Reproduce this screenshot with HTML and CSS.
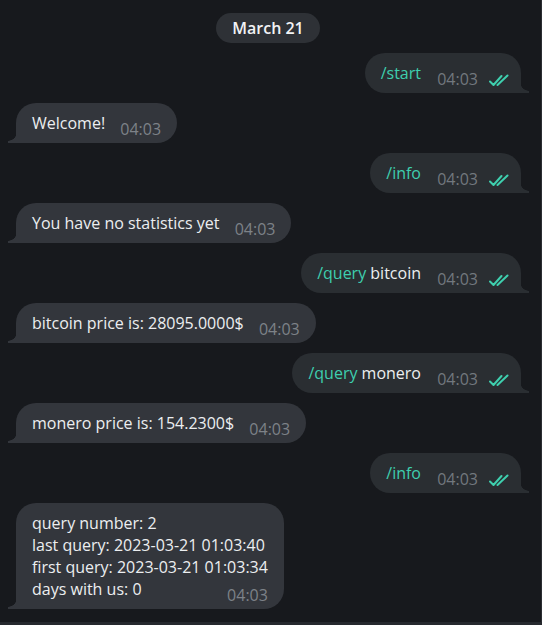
FILE: index.html
```html
<!DOCTYPE html>
<html>
<head>
<meta charset="utf-8">
<link rel="stylesheet" href="styles.css">
</head>
<body>
<div class="app">
  <div class="chat">
    <div class="date">March 21</div>

    <div class="row out">
      <div class="bubble">
        <div class="text"><span class="cmd">/start</span><span class="spacer"></span></div>
        <div class="meta"><span class="time">04:03</span><svg class="check" width="22" height="13" viewBox="0 0 22 13"><path d="M1 7.5 L4.5 11 L12.5 2 M8.5 11 L18.5 1.5" fill="none" stroke="#3ecfae" stroke-width="2" stroke-linecap="round" stroke-linejoin="round"/></svg></div>
      </div>
    </div>

    <div class="row in">
      <div class="bubble">
        <div class="text">Welcome!<span class="spacer"></span></div>
        <div class="meta"><span class="time">04:03</span></div>
      </div>
    </div>

    <div class="row out">
      <div class="bubble">
        <div class="text"><span class="cmd">/info</span><span class="spacer"></span></div>
        <div class="meta"><span class="time">04:03</span><svg class="check" width="22" height="13" viewBox="0 0 22 13"><path d="M1 7.5 L4.5 11 L12.5 2 M8.5 11 L18.5 1.5" fill="none" stroke="#3ecfae" stroke-width="2" stroke-linecap="round" stroke-linejoin="round"/></svg></div>
      </div>
    </div>

    <div class="row in">
      <div class="bubble">
        <div class="text">You have no statistics yet<span class="spacer"></span></div>
        <div class="meta"><span class="time">04:03</span></div>
      </div>
    </div>

    <div class="row out">
      <div class="bubble">
        <div class="text"><span class="cmd">/query</span> bitcoin<span class="spacer"></span></div>
        <div class="meta"><span class="time">04:03</span><svg class="check" width="22" height="13" viewBox="0 0 22 13"><path d="M1 7.5 L4.5 11 L12.5 2 M8.5 11 L18.5 1.5" fill="none" stroke="#3ecfae" stroke-width="2" stroke-linecap="round" stroke-linejoin="round"/></svg></div>
      </div>
    </div>

    <div class="row in">
      <div class="bubble">
        <div class="text">bitcoin price is: 28095.0000$<span class="spacer"></span></div>
        <div class="meta"><span class="time">04:03</span></div>
      </div>
    </div>

    <div class="row out">
      <div class="bubble">
        <div class="text"><span class="cmd">/query</span> monero<span class="spacer"></span></div>
        <div class="meta"><span class="time">04:03</span><svg class="check" width="22" height="13" viewBox="0 0 22 13"><path d="M1 7.5 L4.5 11 L12.5 2 M8.5 11 L18.5 1.5" fill="none" stroke="#3ecfae" stroke-width="2" stroke-linecap="round" stroke-linejoin="round"/></svg></div>
      </div>
    </div>

    <div class="row in">
      <div class="bubble">
        <div class="text">monero price is: 154.2300$<span class="spacer"></span></div>
        <div class="meta"><span class="time">04:03</span></div>
      </div>
    </div>

    <div class="row out">
      <div class="bubble">
        <div class="text"><span class="cmd">/info</span><span class="spacer"></span></div>
        <div class="meta"><span class="time">04:03</span><svg class="check" width="22" height="13" viewBox="0 0 22 13"><path d="M1 7.5 L4.5 11 L12.5 2 M8.5 11 L18.5 1.5" fill="none" stroke="#3ecfae" stroke-width="2" stroke-linecap="round" stroke-linejoin="round"/></svg></div>
      </div>
    </div>

    <div class="row in">
      <div class="bubble">
        <div class="text">query number: 2<br>last query: 2023-03-21 01:03:40<br>first query: 2023-03-21 01:03:34<br>days with us: 0<span class="spacer"></span></div>
        <div class="meta"><span class="time">04:03</span></div>
      </div>
    </div>
  </div>
  <div class="footer"></div>
</div>
</body>
</html>
```

FILE: styles.css
```css
html, body {
  margin: 0;
  padding: 0;
  background: #17191d;
}

body {
  width: 542px;
  height: 625px;
  overflow: hidden;
  font-family: "Open Sans", "DejaVu Sans", sans-serif;
  font-size: 16px;
  color: #eceef0;
}

.app {
  display: flex;
  flex-direction: column;
  height: 625px;
}

.chat {
  height: 622px;
  border-right: 1px solid #2b2e33;
  box-sizing: border-box;
  display: flex;
  flex-direction: column;
  gap: 10px;
  padding-top: 13px;
}

.footer {
  height: 3px;
  background: #26292e;
}

.date {
  align-self: center;
  margin-left: -5px;
  height: 30px;
  line-height: 30px;
  padding: 0 16px;
  border-radius: 15px;
  background: #2e3136;
  font-weight: 600;
  font-size: 16px;
  color: #f2f3f5;
}

.row {
  display: flex;
}

.row.out {
  justify-content: flex-end;
  padding-right: 20px;
}

.row.in {
  justify-content: flex-start;
  padding-left: 16px;
}

.bubble {
  position: relative;
  display: grid;
  border-radius: 20px;
  padding: 9px 16px 3px 16px;
}

.in .bubble {
  background: #33363c;
  border-bottom-left-radius: 0;
}

.out .bubble {
  background: #2a2e32;
  border-bottom-right-radius: 0;
  padding-right: 10px;
}

.in .bubble::before {
  content: "";
  position: absolute;
  left: -8px;
  bottom: 0;
  width: 8px;
  height: 11px;
  background: radial-gradient(circle at 0 0, transparent 8.5px, #33363c 9px);
}

.out .bubble::before {
  content: "";
  position: absolute;
  right: -8px;
  bottom: 0;
  width: 8px;
  height: 11px;
  background: radial-gradient(circle at 100% 0, transparent 8.5px, #2a2e32 9px);
}

.text {
  grid-area: 1 / 1;
  line-height: 22px;
  padding-bottom: 6px;
  white-space: nowrap;
}

.spacer {
  display: inline-block;
  width: 56px;
  height: 1px;
}

.out .spacer {
  width: 90px;
}

.meta {
  grid-area: 1 / 1;
  justify-self: end;
  align-self: end;
  display: flex;
  align-items: center;
  line-height: 22px;
  height: 22px;
}

.time {
  color: #7d8288;
  font-size: 16px;
}

.out .time {
  color: #72787e;
}

.check {
  margin-left: 11px;
  margin-top: 3px;
}

.cmd {
  color: #3ecfae;
}
```
